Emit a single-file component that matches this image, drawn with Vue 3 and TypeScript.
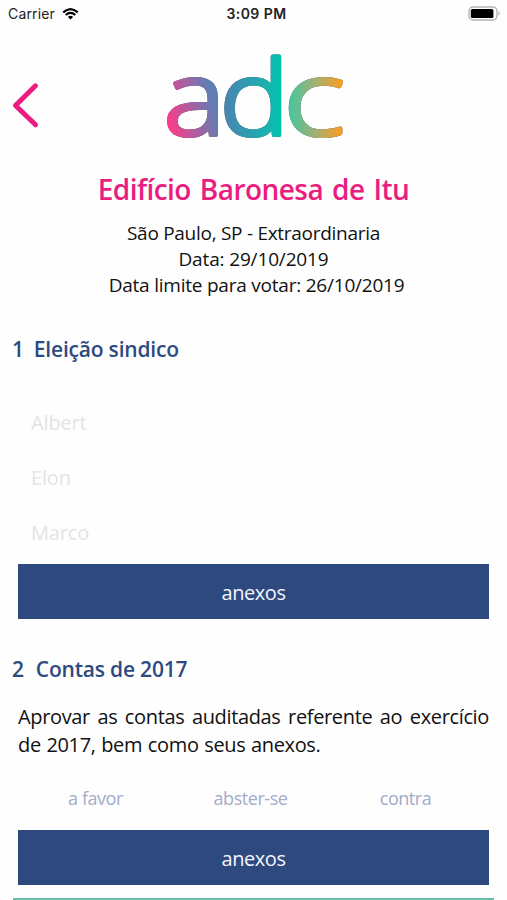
<script setup lang="ts">
interface Choice {
  label: string
}

const candidates: Choice[] = [{ label: 'Albert' }, { label: 'Elon' }, { label: 'Marco' }]
const votes: Choice[] = [{ label: 'a favor' }, { label: 'abster-se' }, { label: 'contra' }]
</script>

<template>
  <main class="screen">
    <div class="status">
      <div class="carrier">
        <span>Carrier</span>
        <svg class="wifi" viewBox="0 0 17 12" width="17" height="12">
          <path d="M1.2 4.4Q8.5-2.2 15.8 4.4" />
          <path d="M3.7 7Q8.5 2.8 13.3 7" />
          <path class="dot" d="M5.9 8.9Q8.5 6.7 11.1 8.9L8.5 11.6Z" />
        </svg>
      </div>
      <span class="time">3:09 PM</span>
      <svg class="battery" viewBox="0 0 33 15" width="33" height="15">
        <rect x="1" y="1" width="28" height="13" rx="4" fill="#fff" stroke="#b5b5b5" stroke-width="1.4" />
        <rect x="2.8" y="2.9" width="22.6" height="9.2" rx="1.5" fill="#000" />
        <path d="M30.6 5.3Q33 7.5 30.6 9.7Z" fill="#aaa" />
      </svg>
    </div>

    <header class="brand">
      <svg class="back" viewBox="0 0 30 48" width="30" height="48">
        <path d="M25.5 4.8L5.5 24.5L25.5 43.7" />
      </svg>
      <svg class="logo" viewBox="0 0 190 100" width="190" height="100">
        <defs>
          <linearGradient id="ga" gradientUnits="userSpaceOnUse" x1="8" y1="75" x2="56" y2="62">
            <stop offset="0" stop-color="#ff3b88" />
            <stop offset="1" stop-color="#5f7fb5" />
          </linearGradient>
          <linearGradient id="gd" gradientUnits="userSpaceOnUse" x1="64" y1="60" x2="118" y2="60">
            <stop offset="0" stop-color="#4b83b2" />
            <stop offset="0.8" stop-color="#18b3ae" />
            <stop offset="1" stop-color="#05bfae" />
          </linearGradient>
          <linearGradient id="gc" gradientUnits="userSpaceOnUse" x1="129" y1="60" x2="183" y2="60">
            <stop offset="0" stop-color="#45c6a0" />
            <stop offset="0.5" stop-color="#a4b070" />
            <stop offset="1" stop-color="#ff9b22" />
          </linearGradient>
        </defs>
        <text x="4" y="86" textLength="61" lengthAdjust="spacingAndGlyphs" fill="url(#ga)" stroke="url(#ga)">a</text>
        <text x="60" y="86" textLength="69" lengthAdjust="spacingAndGlyphs" fill="url(#gd)" stroke="url(#gd)">d</text>
        <text x="124" y="86" textLength="60.5" lengthAdjust="spacingAndGlyphs" fill="url(#gc)" stroke="url(#gc)">c</text>
      </svg>
    </header>

    <section class="intro">
      <h1>Edifício Baronesa de Itu</h1>
      <p class="place">São Paulo, SP - Extraordinaria</p>
      <p class="date">Data: 29/10/2019</p>
      <p class="limit">Data limite para votar: 26/10/2019</p>
    </section>

    <section class="topic">
      <h2><span class="num">1</span><span>Eleição sindico</span></h2>
      <ul class="candidates">
        <li v-for="c in candidates" :key="c.label">{{ c.label }}</li>
      </ul>
      <button class="attach" type="button">anexos</button>
    </section>

    <section class="topic second">
      <h2><span class="num">2</span><span>Contas de 2017</span></h2>
      <p class="detail">Aprovar as contas auditadas referente ao exercício de 2017, bem como seus anexos.</p>
      <div class="votes">
        <span v-for="v in votes" :key="v.label">{{ v.label }}</span>
      </div>
      <button class="attach" type="button">anexos</button>
    </section>
    <div class="rule"></div>
  </main>
</template>

<style>
body {
  background: #fff;
}
</style>

<style scoped>
.screen {
  width: 507px;
  height: 900px;
  overflow: hidden;
  display: flex;
  flex-direction: column;
  background: #fefefe;
  color: #111;
  font-family: "Open Sans", "Noto Sans", sans-serif;
}
h1, h2, p, ul {
  margin: 0;
  padding: 0;
  font-weight: 400;
}
.status {
  flex: none;
  height: 27px;
  display: grid;
  grid-template-columns: 1fr auto 1fr;
  align-items: center;
  padding: 0 6px 0 8px;
  box-sizing: border-box;
  font-family: Inter, "Liberation Sans", sans-serif;
  font-size: 14px;
  line-height: 16px;
  color: #222;
}
.carrier {
  display: flex;
  align-items: center;
  gap: 7px;
  letter-spacing: 0.15px;
}
.wifi {
  fill: none;
  stroke: #000;
  stroke-width: 2.1;
}
.wifi .dot {
  fill: #000;
  stroke: none;
}
.time {
  margin-left: 4px;
  font-weight: 600;
  letter-spacing: 0.45px;
}
.battery {
  justify-self: end;
}
.brand {
  flex: none;
  height: 138px;
  display: flex;
  align-items: flex-start;
  padding-left: 10px;
}
.back {
  margin-top: 54px;
}
.back path {
  fill: none;
  stroke: #ec1c82;
  stroke-width: 5;
  stroke-linecap: round;
  stroke-linejoin: round;
}
.logo {
  margin: 22px 0 0 120px;
  overflow: visible;
  filter: drop-shadow(0 0 0.7px rgba(50, 75, 95, 0.95));
}
.logo text {
  font-size: 104px;
  font-weight: 300;
  stroke-width: 4.2;
  stroke-linejoin: round;
}
.intro {
  flex: none;
  height: 155px;
  text-align: center;
  font-size: 19px;
  line-height: 26px;
  letter-spacing: -0.22px;
}
.intro h1 {
  height: 55px;
  font-size: 28px;
  line-height: 49px;
  font-weight: 600;
  letter-spacing: -0.56px;
  word-spacing: 2.3px;
  color: #e91e80;
}
.place {
  letter-spacing: -0.28px;
}
.intro .date {
  letter-spacing: -0.15px;
}
.limit {
  padding-left: 6px;
}
.topic {
  flex: none;
  height: 320px;
  box-sizing: border-box;
  padding: 0 18px 21px;
  display: flex;
  flex-direction: column;
}
.topic h2 {
  flex: none;
  margin-left: -6px;
  display: flex;
  gap: 10px;
  font-size: 21px;
  line-height: 58px;
  height: 58px;
  font-weight: 600;
  letter-spacing: -0.2px;
  color: #2d4a80;
}
.candidates {
  list-style: none;
  padding: 17px 0 0 13px;
  color: #e4e4e4;
  font-size: 20px;
  line-height: 55px;
  letter-spacing: -0.15px;
}
.attach {
  flex: none;
  width: 471px;
  height: 55px;
  margin-top: auto;
  border: 0;
  padding: 2px 0 0;
  background: #2e497d;
  color: #f4f6ff;
  font: 400 20px/53px "Open Sans", "Noto Sans", sans-serif;
  letter-spacing: -0.45px;
}
.second {
  height: 258px;
  padding-bottom: 13px;
}
.second h2 {
  gap: 12px;
}
.detail {
  width: 471px;
  padding-top: 5px;
  font-size: 20px;
  line-height: 27.5px;
  letter-spacing: -0.35px;
  word-spacing: 0.8px;
  text-align: justify;
}
.votes {
  display: grid;
  grid-template-columns: 155px 155px 155px;
  text-align: center;
  padding-top: 26px;
  font-size: 18px;
  line-height: 28px;
  letter-spacing: -0.45px;
  color: #a3acc9;
}
.rule {
  flex: none;
  width: 481px;
  height: 3px;
  margin-left: 13px;
  background: #67bda6;
}
</style>
